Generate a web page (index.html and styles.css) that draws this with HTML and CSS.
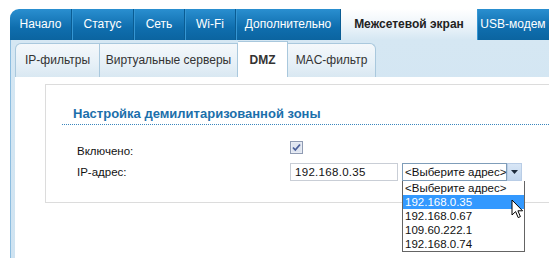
FILE: index.html
```html
<!DOCTYPE html>
<html lang="ru">
<head>
    <meta charset="UTF-8">
    <title>Межсетевой экран - DMZ</title>
    <link rel="stylesheet" href="styles.css">
</head>
<body>
    <div class="menu">
        <a href="#" class="w62">Начало</a>
        <a href="#" class="w62">Статус</a>
        <a href="#" class="w51">Сеть</a>
        <a href="#" class="w51">Wi-Fi</a>
        <a href="#" class="w105">Дополнительно</a>
        <a href="#" class="w136 active">Межсетевой экран</a>
        <a href="#" class="last">USB-модем</a>
    </div>

    <div class="panel">
        <div class="subtabs">
            <a href="#" class="w85">IP-фильтры</a>
            <a href="#" class="w138">Виртуальные серверы</a>
            <a href="#" class="w50 active">DMZ</a>
            <a href="#" class="w88">MAC-фильтр</a>
        </div>

        <div class="content">
            <div class="box">
                <h2 class="title"><span>Настройка демилитаризованной зоны</span></h2>

                <div class="row">
                    <label>Включено:</label>
                    <span class="checkbox">
                        <svg width="13" height="13" viewBox="0 0 13 13">
                            <rect x="0.5" y="0.5" width="12" height="12" fill="#e8ecf4" stroke="#8f9bb3"/>
                            <rect x="2" y="2" width="9" height="9" fill="#dfe5f0"/>
                            <path d="M3 6.5 L5.3 9 L10 3.5" fill="none" stroke="#4a5f9a" stroke-width="1.8"/>
                        </svg>
                    </span>
                </div>

                <div class="row">
                    <label>IP-адрес:</label>
                    <span class="ip-input">192.168.0.35</span>
                    <span class="select">
                        <span class="select-text">&lt;Выберите адрес&gt;</span>
                        <span class="select-btn">
                            <svg width="7" height="4" viewBox="0 0 7 4"><path d="M0 0 L7 0 L3.5 4 Z" fill="#1d2b3c"/></svg>
                        </span>
                        <ul class="options">
                            <li>&lt;Выберите адрес&gt;</li>
                            <li class="selected">192.168.0.35</li>
                            <li>192.168.0.67</li>
                            <li>109.60.222.1</li>
                            <li>192.168.0.74</li>
                        </ul>
                        <svg class="cursor" width="13" height="20" viewBox="0 0 13 20">
                            <path d="M1 1 L1 16 L4.6 12.6 L7.2 18.6 L9.4 17.6 L6.9 11.8 L11.6 11.8 Z" fill="#fff" stroke="#000" stroke-width="1" stroke-linejoin="round"/>
                        </svg>
                    </span>
                </div>
            </div>
        </div>
    </div>
</body>
</html>
```

FILE: styles.css
```css
body {
    margin: 0;
    padding: 9px 0 0 10px;
    font-family: "Liberation Sans", Arial, sans-serif;
    font-size: 12px;
    color: #111;
    background: #fff;
    overflow: hidden;
    height: 249px;
}
.menu {
    display: flex;
    height: 31px;
    border-top-left-radius: 9px;
    background: linear-gradient(#2a8fd0, #0f6eae 60%, #0b64a0);
}
.menu a {
    display: block;
    box-sizing: border-box;
    line-height: 31px;
    text-align: center;
    color: #fff;
    text-decoration: none;
    border-right: 1px solid #0a5c93;
    box-shadow: inset 1px 0 0 #3596d3;
}
.menu a:first-child {
    box-shadow: none;
}
.menu a.active {
    color: #222;
    font-weight: bold;
    background: linear-gradient(#ffffff, #eef5fa 50%, #d5e7f3);
    border-right: none;
    box-shadow: none;
}
.menu a.last {
    flex: 1;
    border-right: none;
}
.w50 { width: 50px; }
.w51 { width: 51px; }
.w62 { width: 62px; }
.w85 { width: 85px; }
.w88 { width: 88px; }
.w105 { width: 105px; }
.w136 { width: 136px; }
.w138 { width: 138px; }
.panel {
    border-left: 1px solid #8cbde0;
    background: linear-gradient(#d5e7f3, #cfe3f1);
    padding: 3px 0 0 4px;
    height: 215px;
}
.subtabs {
    display: flex;
    height: 34px;
}
.subtabs a {
    display: block;
    box-sizing: border-box;
    line-height: 33px;
    text-align: center;
    color: #333;
    text-decoration: none;
    background: linear-gradient(#f4f8fb, #e6f0f7 60%, #d9e8f2);
    border: 1px solid #a9c8dd;
    border-bottom: none;
    border-left: none;
}
.subtabs a:first-child {
    border-left: 1px solid #a9c8dd;
    border-top-left-radius: 6px;
}
.subtabs a:last-child {
    border-top-right-radius: 6px;
}
.subtabs a.active {
    background: #fff;
    font-weight: bold;
    margin-top: -2px;
    line-height: 37px;
    height: 36px;
    position: relative;
    z-index: 1;
}
.content {
    background: #fff;
    padding: 7px 0 0 30px;
    height: 174px;
}
.box {
    border: 1px solid #dcdcdc;
    border-right: none;
    height: 119px;
    padding-top: 22px;
    box-sizing: border-box;
}
.title {
    margin: 0 0 15px 16px;
    padding: 0 0 3px 11px;
    font-size: 13px;
    font-weight: bold;
    color: #1b6fab;
    border-bottom: 1px dotted #3a86bd;
    line-height: 14px;
}
.row {
    display: flex;
    align-items: center;
    height: 21px;
    padding-left: 31px;
}
.row label {
    width: 213px;
    font-size: 11.5px;
}
.checkbox {
    display: flex;
    margin-top: -6px;
}
.ip-input {
    box-sizing: border-box;
    width: 108px;
    height: 18px;
    line-height: 16px;
    border: 1px solid #c9ced6;
    padding-left: 4px;
    font-size: 11.5px;
    letter-spacing: 0.3px;
}
.select {
    position: relative;
    display: flex;
    margin-left: 4px;
    height: 18px;
}
.select-text {
    box-sizing: border-box;
    width: 105px;
    height: 18px;
    line-height: 16px;
    border: 1px solid #7f9db9;
    padding-left: 2px;
    font-size: 11.5px;
    white-space: nowrap;
}
.select-btn {
    display: flex;
    align-items: center;
    justify-content: center;
    width: 15px;
    height: 18px;
    box-sizing: border-box;
    background: linear-gradient(#d8e6f6, #c2d6ee);
    border: 1px solid #b9cde6;
}
.options {
    position: absolute;
    left: 0;
    top: 18px;
    width: 123px;
    box-sizing: border-box;
    margin: 0;
    padding: 0;
    list-style: none;
    background: #fff;
    border: 1px solid #646464;
    border-top: none;
    font-size: 11.5px;
    z-index: 2;
}
.options li {
    height: 14.2px;
    line-height: 14px;
    padding-left: 2px;
    white-space: nowrap;
}
.options li.selected {
    background: #3399ff;
    color: #fff;
}
.cursor {
    position: absolute;
    left: 109px;
    top: 36px;
    z-index: 3;
}
```
